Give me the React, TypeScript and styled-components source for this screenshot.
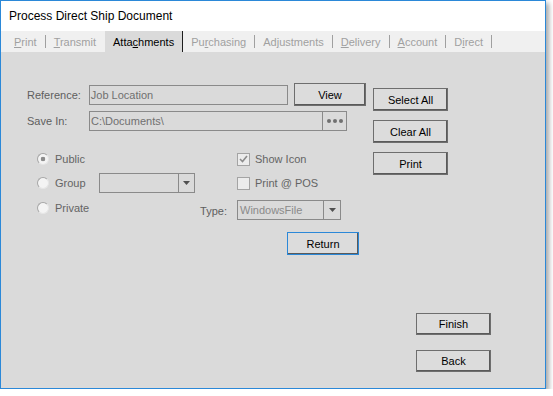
import styled, { createGlobalStyle } from "styled-components";

const GlobalStyle = createGlobalStyle`
  html, body {
    margin: 0;
    padding: 0;
    background: #ffffff;
  }
  body {
    font-family: "Liberation Sans", Arial, sans-serif;
  }
  * {
    box-sizing: border-box;
  }
`;

const Window = styled.div`
  width: 546px;
  height: 389px;
  border: 1px solid #2b88d8;
  box-shadow: 3px 3px 5px rgba(0, 0, 0, 0.35);
  display: flex;
  flex-direction: column;
  background: #dadada;
`;

const TitleBar = styled.div`
  height: 30px;
  background: #ffffff;
  display: flex;
  align-items: center;
  padding-left: 8px;
  font-size: 12px;
  color: #000;
`;

const TabStrip = styled.div`
  height: 21px;
  background: #f0f0f0;
  display: flex;
  padding-left: 5px;
`;

const Tab = styled.div<{ $active?: boolean; $hideSep?: boolean }>`
  position: relative;
  display: flex;
  align-items: center;
  padding: 0 8px;
  font-size: 11px;
  color: ${(p) => (p.$active ? "#000" : "#a0a0a0")};
  background: ${(p) => (p.$active ? "#dadada" : "transparent")};
  border-right: 1px solid ${(p) => (p.$active ? "#1e1e1e" : "transparent")};

  u {
    text-underline-offset: 1px;
  }

  &::after {
    content: "";
    display: ${(p) => (p.$active || p.$hideSep ? "none" : "block")};
    position: absolute;
    right: -1px;
    top: 4px;
    bottom: 4px;
    width: 1px;
    background: #a0a0a0;
  }
`;

const Body = styled.div`
  flex: 1;
  padding: 31px 0 0 26px;
  display: flex;
  flex-direction: column;
  font-size: 11px;
`;

const TopSection = styled.div`
  display: flex;
  gap: 7px;
`;

const MainColumn = styled.div`
  width: 339px;
  display: flex;
  flex-direction: column;
`;

const FieldRow = styled.div<{ $gap?: number }>`
  display: flex;
  align-items: center;
  margin-top: ${(p) => p.$gap ?? 0}px;
`;

const Label = styled.span<{ $w?: number }>`
  width: ${(p) => (p.$w ? `${p.$w}px` : "auto")};
  color: #5e5e5e;
  white-space: nowrap;
`;

const TextBox = styled.div<{ $w: number }>`
  width: ${(p) => p.$w}px;
  height: 20px;
  border: 1px solid #8a8a8a;
  background: #dadada;
  color: #707070;
  display: flex;
  align-items: center;
  padding-left: 1px;
`;

const TextValue = styled.span`
  flex: 1;
`;

const SideBox = styled.div<{ $w: number }>`
  width: ${(p) => p.$w}px;
  height: 100%;
  border-left: 1px solid #8a8a8a;
  display: flex;
  align-items: center;
  justify-content: center;
  gap: 2px;
`;

const Dot = styled.span`
  width: 4px;
  height: 4px;
  border-radius: 50%;
  background: #707070;
`;

const Button = styled.button<{ $w?: number; $h?: number; $focused?: boolean }>`
  width: ${(p) => p.$w ?? 75}px;
  height: ${(p) => p.$h ?? 23}px;
  padding: 0;
  font-family: "Liberation Sans", Arial, sans-serif;
  font-size: 11px;
  color: #000;
  background: #dcdcdc;
  border: 1px solid ${(p) => (p.$focused ? "#2b88d8" : "#6e6e6e")};
  box-shadow: inset -1px -1px 0 #5a5a5a;
  flex-shrink: 0;
`;

const OptionsGrid = styled.div`
  margin-top: 16px;
  padding-left: 10px;
  display: grid;
  grid-template-columns: 62px 96px 42px 1fr;
  grid-template-rows: 24px 24px 26px;
  align-items: center;
`;

const Choice = styled.div<{ $col: number; $span?: number }>`
  grid-column: ${(p) => p.$col} / span ${(p) => p.$span ?? 1};
  display: flex;
  align-items: center;
  gap: 6px;
  color: #646464;
`;

const RadioCircle = styled.span<{ $checked?: boolean }>`
  width: 12px;
  height: 12px;
  border-radius: 50%;
  border: 1px solid;
  border-color: #a6a6a6 #e6e6e6 #e6e6e6 #a6a6a6;
  background: ${(p) =>
    p.$checked
      ? "radial-gradient(circle, #8c8c8c 0 2px, #f4f4f4 2.6px)"
      : "#f4f4f4"};
`;

const CheckBox = styled.span`
  width: 13px;
  height: 13px;
  border: 1px solid #a4a4a4;
  background: #ececec;
  display: flex;
  align-items: center;
  justify-content: center;
  margin-right: -1px;
`;

const TypeLabel = styled.span`
  grid-column: 3;
  align-self: end;
  margin-bottom: 4px;
  padding-right: 10px;
  text-align: right;
  color: #5e5e5e;
`;

const Combo = styled.div<{ $w: number; $col: number; $end?: boolean }>`
  grid-column: ${(p) => p.$col};
  align-self: ${(p) => (p.$end ? "end" : "center")};
  margin-bottom: ${(p) => (p.$end ? "1px" : "0")};
  width: ${(p) => p.$w}px;
  height: 20px;
  border: 1px solid #8a8a8a;
  color: #8a8a8a;
  display: flex;
  align-items: center;
  padding-left: 2px;
`;

const ReturnButton = styled(Button)`
  margin-top: 11px;
  margin-left: 260px;
`;

const SideButtons = styled.div`
  margin-top: 5px;
  display: flex;
  flex-direction: column;
  gap: 9px;
`;

const Footer = styled.div`
  margin-top: 58px;
  padding-right: 54px;
  display: flex;
  flex-direction: column;
  align-items: flex-end;
  gap: 15px;
`;

const Arrow = () => (
  <svg width="7" height="4" viewBox="0 0 7 4">
    <path d="M0 0h7L3.5 4z" fill="#505050" />
  </svg>
);

const Check = () => (
  <svg width="9" height="8" viewBox="0 0 9 8">
    <path d="M1 4l2.5 2.5L8 1" stroke="#8c8c8c" strokeWidth="1.6" fill="none" />
  </svg>
);

export default function App() {
  return (
    <>
      <GlobalStyle />
      <Window>
        <TitleBar>Process Direct Ship Document</TitleBar>
        <TabStrip>
          <Tab><span><u>P</u>rint</span></Tab>
          <Tab $hideSep><span><u>T</u>ransmit</span></Tab>
          <Tab $active><span>Atta<u>c</u>hments</span></Tab>
          <Tab><span>Pu<u>r</u>chasing</span></Tab>
          <Tab><span>Ad<u>j</u>ustments</span></Tab>
          <Tab><span><u>D</u>elivery</span></Tab>
          <Tab><span><u>A</u>ccount</span></Tab>
          <Tab><span>D<u>i</u>rect</span></Tab>
        </TabStrip>
        <Body>
          <TopSection>
            <MainColumn>
              <FieldRow>
                <Label $w={62}>Reference:</Label>
                <TextBox $w={200}>
                  <TextValue>Job Location</TextValue>
                </TextBox>
                <Button $w={72} style={{ marginLeft: 6 }}>View</Button>
              </FieldRow>
              <FieldRow $gap={5}>
                <Label $w={62}>Save In:</Label>
                <TextBox $w={258}>
                  <TextValue>C:\Documents\</TextValue>
                  <SideBox $w={24}>
                    <Dot />
                    <Dot />
                    <Dot />
                  </SideBox>
                </TextBox>
              </FieldRow>
              <OptionsGrid>
                <Choice $col={1} $span={2}>
                  <RadioCircle $checked />
                  Public
                </Choice>
                <Choice $col={4}>
                  <CheckBox><Check /></CheckBox>
                  Show Icon
                </Choice>
                <Choice $col={1}>
                  <RadioCircle />
                  Group
                </Choice>
                <Combo $col={2} $w={96}>
                  <TextValue />
                  <SideBox $w={16}><Arrow /></SideBox>
                </Combo>
                <Choice $col={4}>
                  <CheckBox />
                  Print @ POS
                </Choice>
                <Choice $col={1}>
                  <RadioCircle />
                  Private
                </Choice>
                <TypeLabel>Type:</TypeLabel>
                <Combo $col={4} $w={104} $end>
                  <TextValue>WindowsFile</TextValue>
                  <SideBox $w={17}><Arrow /></SideBox>
                </Combo>
              </OptionsGrid>
              <ReturnButton $w={72} $focused>Return</ReturnButton>
            </MainColumn>
            <SideButtons>
              <Button>Select All</Button>
              <Button>Clear All</Button>
              <Button>Print</Button>
            </SideButtons>
          </TopSection>
          <Footer>
            <Button $h={22}>Finish</Button>
            <Button $h={22}>Back</Button>
          </Footer>
        </Body>
      </Window>
    </>
  );
}
